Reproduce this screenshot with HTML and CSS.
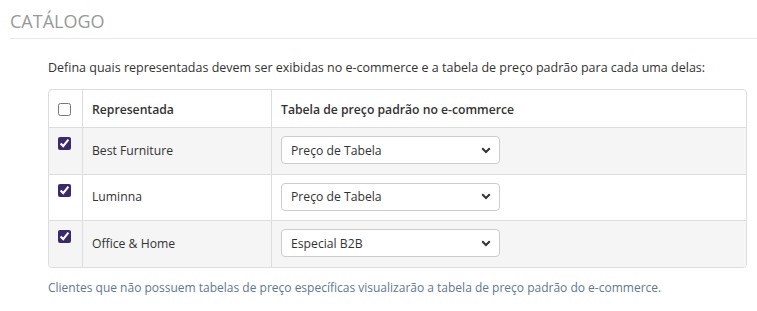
FILE: index.html
```html
<!DOCTYPE html>
<html lang="pt-BR">
<head>
    <meta charset="UTF-8">
    <title>Catálogo</title>
    <link rel="stylesheet" href="styles.css">
</head>
<body>
    <section class="catalog">
        <h2 class="catalog-title">CATÁLOGO</h2>

        <div class="catalog-body">
            <p class="intro">Defina quais representadas devem ser exibidas no e-commerce e a tabela de preço padrão para cada uma delas:</p>

            <div class="table-wrap">
                <table class="rep-table">
                    <thead>
                        <tr>
                            <th class="col-check"><input type="checkbox"></th>
                            <th class="col-name">Representada</th>
                            <th>Tabela de preço padrão no e-commerce</th>
                        </tr>
                    </thead>
                    <tbody>
                        <tr>
                            <td class="col-check"><input type="checkbox" checked></td>
                            <td class="col-name">Best Furniture</td>
                            <td>
                                <select class="price-select">
                                    <option>Preço de Tabela</option>
                                    <option>Especial B2B</option>
                                </select>
                            </td>
                        </tr>
                        <tr>
                            <td class="col-check"><input type="checkbox" checked></td>
                            <td class="col-name">Luminna</td>
                            <td>
                                <select class="price-select">
                                    <option>Preço de Tabela</option>
                                    <option>Especial B2B</option>
                                </select>
                            </td>
                        </tr>
                        <tr>
                            <td class="col-check"><input type="checkbox" checked></td>
                            <td class="col-name">Office &amp; Home</td>
                            <td>
                                <select class="price-select">
                                    <option>Especial B2B</option>
                                    <option>Preço de Tabela</option>
                                </select>
                            </td>
                        </tr>
                    </tbody>
                </table>
            </div>

            <p class="help">Clientes que não possuem tabelas de preço específicas visualizarão a tabela de preço padrão do e-commerce.</p>
        </div>
    </section>
</body>
</html>
```

FILE: styles.css
```css
body {
    margin: 0;
    padding: 0;
    font-family: "Open Sans", "Noto Sans", sans-serif;
    background: #fff;
    color: #333;
}
.catalog {
    padding: 10px 0 0 10px;
}
.catalog-title {
    margin: 0;
    padding-bottom: 6px;
    font-size: 18px;
    font-weight: 400;
    line-height: 22px;
    color: #999;
    border-bottom: 1px solid #e8e8e8;
}
.catalog-body {
    padding: 0 10px 0 38px;
}
.intro {
    margin: 20px 0 12px;
    font-size: 12.5px;
    line-height: 18px;
    color: #333;
}
.table-wrap {
    border: 1px solid #ddd;
    border-radius: 4px;
    overflow: hidden;
}
.rep-table {
    width: 100%;
    border-collapse: collapse;
    font-size: 12.2px;
}
.rep-table th,
.rep-table td {
    text-align: left;
    vertical-align: middle;
    padding: 8px 9px 9.6px;
    border-left: 1px solid #ddd;
    border-top: 1px solid #ddd;
}
.rep-table th:first-child,
.rep-table td:first-child {
    border-left: none;
}
.rep-table thead th {
    border-top: none;
    font-weight: 600;
    height: 20px;
    padding-top: 9px;
    padding-bottom: 8px;
}
.rep-table tbody tr:nth-child(odd) {
    background: #f5f5f5;
}
.col-check {
    width: 15px;
}
.rep-table tbody .col-check {
    vertical-align: top;
    padding-top: 9px;
}
.col-name {
    width: 170px;
}
input[type="checkbox"] {
    margin: 0;
    width: 13px;
    height: 13px;
    accent-color: #3b2a6b;
    display: block;
}
.price-select {
    -webkit-appearance: none;
    appearance: none;
    display: block;
    width: 219px;
    height: 28px;
    padding: 0 28px 0 9px;
    border: 1px solid #ccc;
    border-radius: 4px;
    background-color: #fff;
    background-image: url("data:image/svg+xml;utf8,<svg xmlns='http://www.w3.org/2000/svg' width='10' height='7' viewBox='0 0 10 7'><path d='M1.2 1.3 L5 5 L8.8 1.3' fill='none' stroke='%23333' stroke-width='2'/></svg>");
    background-repeat: no-repeat;
    background-position: right 8px center;
    font-family: "Open Sans", "Noto Sans", sans-serif;
    font-size: 12.2px;
    color: #333;
}
.help {
    margin: 11px 0 0;
    font-size: 12px;
    line-height: 18px;
    color: #60788f;
}
```
